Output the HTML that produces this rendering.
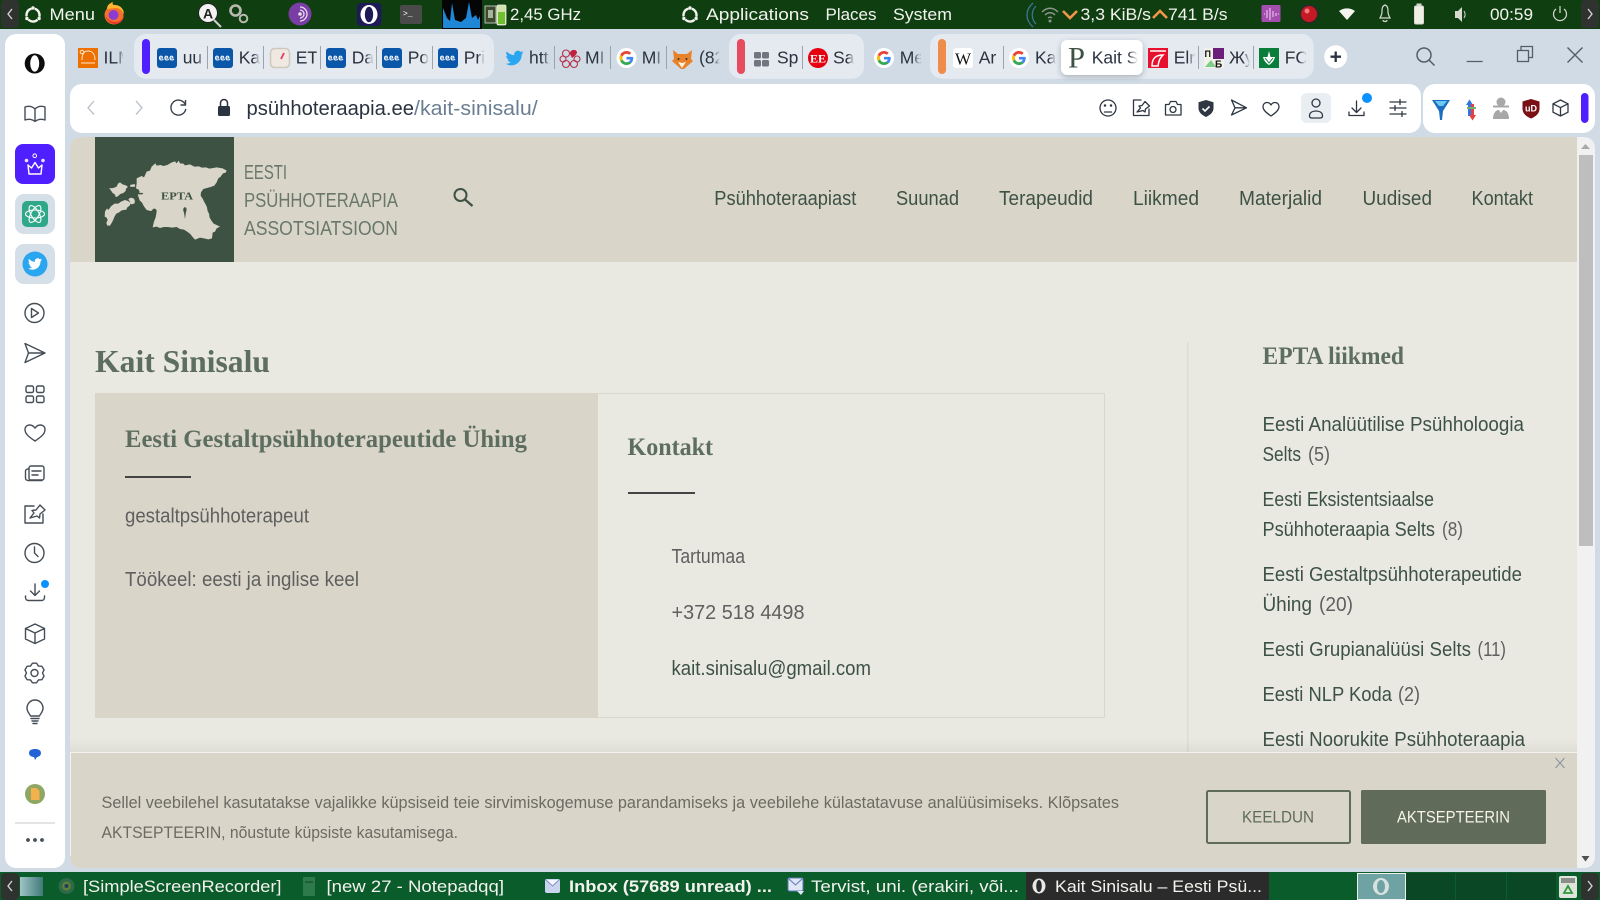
<!DOCTYPE html>
<html lang="et"><head><meta charset="utf-8"><title>Kait Sinisalu – Eesti Psühhoteraapia Assotsiatsioon</title>
<style>
html,body{margin:0;padding:0;width:1600px;height:900px;overflow:hidden;background:#d0dbe5}
svg{display:block}
text{font-family:"Liberation Sans",sans-serif;white-space:pre}
.sys{font-size:16.5px;fill:#f2f2ee}
.tab{font-size:17.5px;fill:#2b3340}
.j{font-size:20px;fill:#5f5f5f}
.l{font-size:20px;fill:#3d5245}
.nav{font-size:20px;fill:#3d5245}
.logo{font-size:20px;fill:#6a786c}
.h{font-family:"Liberation Serif",serif;font-weight:bold;fill:#5d6e60}
.c{font-size:17px;fill:#6b6b63}
.ic{fill:none;stroke:#454d57;stroke-width:1.4;stroke-linecap:round;stroke-linejoin:round}
.ic2{fill:none;stroke:#2f3742;stroke-width:1.3;stroke-linecap:round;stroke-linejoin:round}
</style></head><body>
<svg width="1600" height="900" viewBox="0 0 1600 900" xmlns="http://www.w3.org/2000/svg">
<defs>
<linearGradient id="fl"><stop offset="0" stop-color="#e4eaf0" stop-opacity="0"/><stop offset="1" stop-color="#e4eaf0"/></linearGradient>
<linearGradient id="fo"><stop offset="0" stop-color="#d0dbe5" stop-opacity="0"/><stop offset="1" stop-color="#d0dbe5"/></linearGradient>
<linearGradient id="fw"><stop offset="0" stop-color="#fff" stop-opacity="0"/><stop offset="1" stop-color="#fff"/></linearGradient>
<linearGradient id="sh" x1="0" y1="0" x2="0" y2="1"><stop offset="0" stop-color="#000" stop-opacity="0"/><stop offset="1" stop-color="#000" stop-opacity=".05"/></linearGradient>
<linearGradient id="desk" x1="0" y1="0" x2="1" y2="0"><stop offset="0" stop-color="#9fc4c4"/><stop offset="1" stop-color="#3f7a78"/></linearGradient>
<symbol id="err" viewBox="0 0 20 20"><rect width="20" height="20" rx="3" fill="#0a56a8"/><path d="M2.500 10h3c0-2.500-3-2.500-3 0 0 2.500 3 2.500 4 1M7.800 10h3c0-2.500-3-2.500-3 0 0 2.500 3 2.500 4 1M13 10h3c0-2.500-3-2.500-3 0 0 2.500 3 2.500 4 1" fill="none" stroke="#fff" stroke-width="1"/></symbol>
<symbol id="g" viewBox="0 0 20 20"><circle cx="10" cy="10" r="10" fill="#fff"/><g transform="translate(3 3) scale(.2917)"><path fill="#EA4335" d="M24 9.5c3.54 0 6.71 1.22 9.21 3.6l6.85-6.85C35.9 2.38 30.47 0 24 0 14.62 0 6.51 5.38 2.56 13.22l7.98 6.19C12.43 13.72 17.74 9.5 24 9.5z"/><path fill="#4285F4" d="M46.98 24.55c0-1.57-.15-3.09-.38-4.55H24v9.02h12.94c-.58 2.96-2.26 5.48-4.78 7.18l7.73 6c4.51-4.18 7.09-10.36 7.09-17.65z"/><path fill="#FBBC05" d="M10.53 28.59c-.48-1.45-.76-2.99-.76-4.59s.27-3.14.76-4.59l-7.98-6.19C.92 16.46 0 20.12 0 24c0 3.88.92 7.54 2.56 10.78l7.97-6.19z"/><path fill="#34A853" d="M24 48c6.48 0 11.93-2.13 15.89-5.81l-7.73-6c-2.15 1.45-4.92 2.3-8.16 2.3-6.26 0-11.57-4.22-13.47-9.91l-7.98 6.19C6.51 42.62 14.62 48 24 48z"/></g></symbol>
<symbol id="tw" viewBox="0 0 24 24"><path d="M23.953 4.57a10 10 0 01-2.825.775 4.958 4.958 0 002.163-2.723c-.951.555-2.005.959-3.127 1.184a4.92 4.92 0 00-8.384 4.482C7.69 8.095 4.067 6.13 1.64 3.162a4.822 4.822 0 00-.666 2.475c0 1.71.87 3.213 2.188 4.096a4.904 4.904 0 01-2.228-.616v.06a4.923 4.923 0 003.946 4.827 4.996 4.996 0 01-2.212.085 4.936 4.936 0 004.604 3.417 9.867 9.867 0 01-6.102 2.105c-.39 0-.779-.023-1.17-.067a13.995 13.995 0 007.557 2.209c9.053 0 13.998-7.496 13.998-13.985 0-.21 0-.42-.015-.63A9.935 9.935 0 0024 4.59z"/></symbol>
<symbol id="spin" viewBox="0 0 20 20"><circle cx="10" cy="10" r="6.500" fill="none" stroke="#f2f2ee" stroke-width="2.400" stroke-dasharray="10 3.600" transform="rotate(-74 10 10)"/><circle cx="10" cy="3" r="1.700" fill="#f2f2ee"/><circle cx="3.900" cy="13.500" r="1.700" fill="#f2f2ee"/><circle cx="16.100" cy="13.500" r="1.700" fill="#f2f2ee"/></symbol>
</defs>

<!-- browser background -->
<rect width="1600" height="900" fill="#d0dbe5"/>

<!-- top system bar -->
<rect width="1600" height="29" fill="#0f3f10"/>
<rect x="1" y="0" width="18" height="28" rx="4" fill="#2f332f"/>
<path d="M12 9l-4 5 4 5" fill="none" stroke="#d8d8d8" stroke-width="1.300"/>
<use href="#spin" x="23" y="5" width="20" height="20"/>
<text class="sys" x="49.500" y="20" textLength="45.500" lengthAdjust="spacingAndGlyphs">Menu</text>
<circle cx="114" cy="15" r="9.500" fill="#f5702c"/><path d="M107 9c0-4 3-6 6-7-1 2 0 3 2 3 5 0 9 4 9 9-2-4-5-6-8-6z" fill="#ffb52e"/><circle cx="113.500" cy="15" r="5" fill="#8a3bd1"/><path d="M105 15c1 5 5 9 10 9s8-3 9-8c-2 4-5 6-9 6s-8-3-10-7z" fill="#e8372e"/>
<circle cx="208" cy="13" r="9.500" fill="#f2f2f2" stroke="#222" stroke-width="1"/><text x="208" y="18.500" text-anchor="middle" style="font-size:14px;font-weight:bold;fill:#222">A</text><path d="M214 20l7 7" stroke="#cfcfcf" stroke-width="2"/>
<circle cx="235.500" cy="10.500" r="5" fill="none" stroke="#b9b9b0" stroke-width="2.600"/><circle cx="243.500" cy="18.500" r="3.800" fill="none" stroke="#b9b9b0" stroke-width="2"/>
<circle cx="300" cy="14" r="11.500" fill="#7a3da3"/><path d="M300 7a7 7 0 010 14M300 10a4 4 0 010 8" fill="none" stroke="#e8def0" stroke-width="1.300"/><circle cx="300" cy="14" r="1.800" fill="#e8def0"/>
<rect x="357" y="3" width="24.500" height="23" rx="4" fill="#1c1b58"/><ellipse cx="369" cy="14.500" rx="8.500" ry="9.500" fill="#fff"/><ellipse cx="369" cy="14.500" rx="4.200" ry="7.800" fill="#1c1b58"/>
<rect x="400" y="5" width="22" height="19" rx="2" fill="#4a4a4a"/><text x="403" y="16" style="font-size:8px;fill:#fff;font-family:'Liberation Mono',monospace">&gt;_</text>
<rect x="442" y="0" width="40" height="29" fill="#050505"/><path d="M443 28V8l4 10 3 3 2-18 3 17 6 2 5-4 3-16 3 16 4-3 2 5 2-4v12z" fill="#1f87d6"/>
<rect x="485" y="6" width="11" height="17" fill="#3a4a2a" stroke="#ddd" stroke-width=".8"/><rect x="488" y="10" width="5" height="8" fill="#a9b39b"/><rect x="497" y="5" width="9" height="20" rx="1.500" fill="#cfe3a8" stroke="#eee" stroke-width=".8"/><rect x="498" y="12" width="7" height="12" fill="#6fbf2f"/>
<text class="sys" x="510" y="20" textLength="71" lengthAdjust="spacingAndGlyphs">2,45 GHz</text>
<use href="#spin" x="680" y="5" width="20" height="20"/>
<text class="sys" x="706" y="20" textLength="103" lengthAdjust="spacingAndGlyphs">Applications</text>
<text class="sys" x="825.500" y="20" textLength="51" lengthAdjust="spacingAndGlyphs">Places</text>
<text class="sys" x="893" y="20" textLength="59" lengthAdjust="spacingAndGlyphs">System</text>
<path d="M1033 3c-8 7-8 17 0 24M1036 6c-5 5-5 13 0 18" fill="none" stroke="#3f78a0" stroke-width="1.200"/>
<path d="M1042 12c5-5 11-5 16 0M1045 15c3-3 7-3 10 0M1048 18c1-1 3-1 4 0" fill="none" stroke="#8f948f" stroke-width="1.400"/><circle cx="1050" cy="21" r="1.500" fill="#8f948f"/>
<path d="M1063 11l7 7 7-7" fill="none" stroke="#f0954a" stroke-width="2.600"/>
<text class="sys" x="1080.500" y="20" textLength="70.500" lengthAdjust="spacingAndGlyphs">3,3 KiB/s</text>
<path d="M1153 18l7-7 7 7" fill="none" stroke="#f0954a" stroke-width="2.600"/>
<text class="sys" x="1168" y="20" textLength="59.500" lengthAdjust="spacingAndGlyphs">741 B/s</text>
<rect x="1261.500" y="5" width="19" height="17" rx="1.500" fill="#a64db0"/><path d="M1264 14h1M1267 10v8M1270 8v12M1273 11v6M1276 13v3M1278 14h1" stroke="#f0d8f4" stroke-width="1"/>
<circle cx="1309" cy="14" r="9.500" fill="#2a2a2a"/><circle cx="1309" cy="14" r="8" fill="#c41a24"/><circle cx="1307" cy="11" r="2.500" fill="#f07a80"/>
<path d="M1339 11c5-3.500 11-3.500 16 0l-8 9z" fill="#f5f5f0"/>
<path d="M1385 5c-3 1-3 4-3 7s-1 4-2 6h10c-1-2-2-3-2-6s0-6-3-7zM1383 20c0 2 4 2 4 0" fill="none" stroke="#d8d8d0" stroke-width="1.200"/>
<rect x="1414.500" y="6" width="9" height="18" rx="1.500" fill="#eef0e6" stroke="#d8d8d0"/><rect x="1416.500" y="3.500" width="5" height="2.500" fill="#d8d8d0"/>
<path d="M1455 11h3l4-4v15l-4-4h-3z" fill="#d8d8d0"/><path d="M1464 11c1.500 2 1.500 5 0 7" fill="none" stroke="#d8d8d0" stroke-width="1"/>
<text class="sys" x="1490" y="20" textLength="43" lengthAdjust="spacingAndGlyphs">00:59</text>
<path d="M1556 9a6.500 6.500 0 108 0M1560 6v7" fill="none" stroke="#d8d8d0" stroke-width="1.200"/>
<rect x="1581" y="0" width="18" height="28" rx="4" fill="#2f332f"/>
<path d="M1588 9l4 5-4 5" fill="none" stroke="#d8d8d8" stroke-width="1.300"/>

<!-- sidebar -->
<rect x="5" y="34" width="60" height="834" rx="11" fill="#fff"/>
<ellipse cx="34.700" cy="63.500" rx="10" ry="10" fill="#0d0d0d"/><ellipse cx="34.700" cy="63.500" rx="4.500" ry="8.200" fill="#fff"/>
<path class="ic" d="M35 109c-3-3-7-3-10-2v13c3-1 7-1 10 1.500 3-2.500 7-2.500 10-1.500v-13c-3-1-7-1-10 2zM35 109v12"/>
<rect x="15" y="144" width="40" height="40" rx="8" fill="#4f1fff"/>
<path d="M28 165l3.500 3 3.500-5.500 3.500 5.500 3.500-3-1 9H29z" fill="none" stroke="#fff" stroke-width="1.400" stroke-linejoin="round"/><circle cx="26.500" cy="160.500" r="1.800" fill="#e8e0ff"/><circle cx="34.700" cy="155.700" r="1.800" fill="none" stroke="#fff"/><circle cx="43" cy="160.500" r="1.800" fill="#e8e0ff"/>
<rect x="15" y="194" width="40" height="40" rx="9" fill="#d5dfe8"/>
<rect x="22" y="201" width="26" height="26" rx="5" fill="#2fa88a"/>
<g fill="none" stroke="#fff" stroke-width="1.100"><ellipse cx="35" cy="214" rx="9.500" ry="4"/><ellipse cx="35" cy="214" rx="9.500" ry="4" transform="rotate(60 35 214)"/><ellipse cx="35" cy="214" rx="9.500" ry="4" transform="rotate(120 35 214)"/></g>
<rect x="15" y="244" width="40" height="40" rx="9" fill="#d5dfe8"/>
<circle cx="35" cy="264" r="12.500" fill="#2aa5f0"/>
<use href="#tw" x="28" y="257" width="14" height="14" fill="#fff"/>
<g class="ic">
<circle cx="34.500" cy="313" r="9.500"/><path d="M31.500 308.500l7 4.500-7 4.500z"/>
<path d="M25 343.500l20 9.500-20 9.500 3.500-9.500zM28.500 353h16.500"/>
<rect x="26" y="386" width="7.500" height="6.500" rx="1.500"/><rect x="36.500" y="386" width="7.500" height="6.500" rx="1.500"/><rect x="26" y="396" width="7.500" height="6.500" rx="1.500"/><rect x="36.500" y="396" width="7.500" height="6.500" rx="1.500"/>
<path d="M35 441c-6-4-10-7-10-11.500 0-3 2.300-4.500 4.500-4.500 2.200 0 4.300 1.200 5.500 3.200 1.200-2 3.300-3.200 5.500-3.200 2.200 0 4.500 1.500 4.500 4.500 0 4.500-4 7.500-10 11.500z"/>
<rect x="29" y="466" width="15" height="14" rx="2"/><path d="M29 469h-1c-1.500 0-2.500 1-2.500 2v7c0 1.500 1 2.500 2.500 2.500h14M32 471h9M32 475h6"/>
<path d="M34 506h-9v17h18v-9M30 518l4-5-2-2.500 4-.5 4-5 5 5-5 4-.5 4-2.500-2z"/>
<circle cx="34.500" cy="553" r="9.500"/><path d="M34.500 547v6l3.500 3.500"/>
<path d="M35 584v11M30.500 591l4.500 4.500 4.500-4.500M25.500 596v1.500c0 2 1.500 3 3 3h13c1.500 0 3-1 3-3V596"/>
<path d="M35 624l9.500 4.500v10.500l-9.500 4.500-9.500-4.500v-10.500zM25.500 628.500l9.500 4.500 9.500-4.500M35 633v10.500"/>
<circle cx="34.500" cy="673" r="3.500"/>
<polygon transform="translate(34.500 673)" points="-2.080,-9.780 2.080,-9.780 4,-6.930 7.430,-6.690 9.510,-3.090 8,0 9.510,3.090 7.430,6.690 4,6.930 2.080,9.780 -2.080,9.780 -4,6.930 -7.430,6.690 -9.510,3.090 -8,0 -9.510,-3.090 -7.430,-6.690 -4,-6.930"/>
<path d="M30.500 716c-1-2.500-3.500-4-3.500-8a8 8 0 0116 0c0 4-2.500 5.500-3.500 8zM31 718.500h8M32 721h6M33 723.500h4"/>
</g>
<circle cx="45" cy="584" r="4" fill="#0a90ff"/>
<path d="M29 753c0-3 3-4 6-4s6 1 6 4-3 4-4 4l-2 3-1-3c-2 0-5-1-5-4z" fill="#2463d6"/>
<circle cx="35" cy="794" r="10" fill="#8fa665"/><path d="M31 788h5.500l3 3v9h-8.500z" fill="#f2b14a"/>
<line x1="15" y1="823" x2="55" y2="823" stroke="#c5c9ce" stroke-width="1"/>
<circle cx="28" cy="840" r="1.900" fill="#454d57"/><circle cx="35" cy="840" r="1.900" fill="#454d57"/><circle cx="42" cy="840" r="1.900" fill="#454d57"/>

<!-- tab groups -->
<rect x="134" y="34" width="360" height="44.700" rx="12" fill="#e4eaf0"/>
<rect x="729" y="34" width="135" height="44.700" rx="12" fill="#e4eaf0"/>
<rect x="930" y="34" width="383.700" height="44.700" rx="12" fill="#e4eaf0"/>
<rect x="142" y="39" width="8" height="35" rx="4" fill="#4f1fff"/>
<rect x="737" y="39" width="8" height="35" rx="4" fill="#e84a60"/>
<rect x="938" y="39" width="8" height="35" rx="4" fill="#f08c4a"/>

<!-- dividers -->
<g stroke="#9aa4ae" stroke-width="1">
<path d="M207.500 46v23M263.500 46v23M320.500 46v23M376.500 46v23M432.500 46v23M554.500 46v23M610.500 46v23M666.500 46v23M802.500 46v23M1003.500 46v23M1198.500 46v23M1253.500 46v23"/>
</g>

<!-- tab icons -->
<rect x="78" y="48" width="20" height="20" fill="#ee7000"/><path d="M81 63h14M82 60c0-6 2-9 6-9 5 0 7 4 7 9" fill="none" stroke="#ffe8d0" stroke-width="1"/><circle cx="82" cy="52" r="1.800" fill="none" stroke="#ffe8d0"/>
<use href="#err" x="157" y="48" width="20" height="20"/>
<use href="#err" x="213" y="48" width="20" height="20"/>
<rect x="270.500" y="48.500" width="19" height="19" rx="4" fill="#efe9e2" stroke="#cfc6bc" stroke-width="1.500"/><path d="M281 59l3-6" stroke="#e8356a" stroke-width="1.800"/>
<use href="#err" x="326" y="48" width="20" height="20"/>
<use href="#err" x="382" y="48" width="20" height="20"/>
<use href="#err" x="438" y="48" width="20" height="20"/>
<use href="#tw" x="505.500" y="49" width="18" height="18" fill="#2aa5f0"/>
<g fill="none" stroke="#b2324a" stroke-width="1.100"><circle cx="566" cy="53.500" r="3.500"/><circle cx="574" cy="64" r="3.500"/><circle cx="566" cy="64" r="3.500"/><circle cx="563" cy="59" r="3"/><circle cx="577" cy="59" r="3"/></g><path d="M570 54c-1-4 6-6 7-2 0 3-4 5-5 6z" fill="#c0213c"/>
<use href="#g" x="616.500" y="48" width="20" height="20"/>
<path d="M673 50l5 4h9l5-4-1 9 2 2-9 8h-3l-9-8 2-2z" fill="#e8822a"/><path d="M678 62l4 6 4-6-4 1z" fill="#fff2df"/><circle cx="678.500" cy="59" r="1" fill="#333"/><circle cx="686.500" cy="59" r="1" fill="#333"/>
<rect x="754" y="52" width="7" height="6.500" rx="1.500" fill="#6f7680"/><rect x="762" y="52" width="7" height="6.500" rx="1.500" fill="#6f7680"/><rect x="754" y="60" width="7" height="6.500" rx="1.500" fill="#6f7680"/><rect x="762" y="60" width="7" height="6.500" rx="1.500" fill="#6f7680"/>
<circle cx="818" cy="58" r="10" fill="#e4000f"/><text x="818" y="62.500" text-anchor="middle" style="font-size:12px;font-family:'Liberation Serif',serif;font-weight:bold;fill:#fff">EE</text>
<use href="#g" x="874" y="48" width="20" height="20"/>
<rect x="953" y="48" width="20" height="20" rx="3" fill="#fff"/><text x="963" y="64.500" text-anchor="middle" style="font-size:17px;font-family:'Liberation Serif',serif;fill:#111">W</text>
<use href="#g" x="1009" y="48" width="20" height="20"/>
<rect x="1061" y="40" width="81.700" height="35" rx="6" fill="#fff" style="filter:drop-shadow(0 2px 3px rgba(60,70,80,.35))"/>
<text x="1068" y="67.500" textLength="17" lengthAdjust="spacingAndGlyphs" style="font-size:30px;font-family:'Liberation Serif',serif;fill:#3e5244">P</text>
<rect x="1148" y="48" width="20" height="20" fill="#e8112d"/><path d="M1150 51h16M1152 66c0-8 4-11 11-11-3 3-4 5-5 11z" fill="none" stroke="#fff" stroke-width="1.500"/>
<rect x="1204" y="48" width="20" height="20" fill="#f2f2e8"/><rect x="1213" y="48" width="11" height="11" fill="#6c1f7a"/><path d="M1205 67l6-7 5 7z" fill="#7ecb8a"/><text x="1204.500" y="57" style="font-size:9px;font-weight:bold;fill:#111">П</text><text x="1215" y="67.500" style="font-size:10px;font-weight:bold;fill:#111">Б</text>
<rect x="1259" y="48" width="20" height="20" fill="#0a7d3b"/><path d="M1269 51l-2 8 2 2 2-2zM1263 57c1 4 3 6 6 8 3-2 5-4 6-8" fill="#fff" stroke="none"/><path d="M1265 58l4 5 4-5" fill="none" stroke="#0a7d3b" stroke-width="1"/>

<!-- tab text -->
<svg x="103.500" y="44" width="20" height="26"><text class="tab" y="19.600">ILM</text><rect x="14" width="6" height="26" fill="url(#fo)"/></svg>
<svg x="182.700" y="44" width="21" height="26"><text class="tab" y="19.600">uu</text><rect x="15" width="6" height="26" fill="url(#fl)"/></svg>
<svg x="238.700" y="44" width="21" height="26"><text class="tab" y="19.600">Ka</text><rect x="15" width="6" height="26" fill="url(#fl)"/></svg>
<svg x="295.700" y="44" width="21" height="26"><text class="tab" y="19.600">ET</text></svg>
<svg x="351.700" y="44" width="21" height="26"><text class="tab" y="19.600">Da</text><rect x="14" width="7" height="26" fill="url(#fl)"/></svg>
<svg x="407.700" y="44" width="21" height="26"><text class="tab" y="19.600">Po</text><rect x="14" width="7" height="26" fill="url(#fl)"/></svg>
<svg x="463.700" y="44" width="21" height="26"><text class="tab" y="19.600">Pri</text><rect x="14" width="7" height="26" fill="url(#fl)"/></svg>
<svg x="529" y="44" width="21" height="26"><text class="tab" y="19.600">https</text><rect x="14" width="7" height="26" fill="url(#fo)"/></svg>
<svg x="585" y="44" width="21" height="26"><text class="tab" y="19.600">MI</text><rect x="14" width="7" height="26" fill="url(#fo)"/></svg>
<svg x="641.700" y="44" width="21" height="26"><text class="tab" y="19.600">MI</text><rect x="14" width="7" height="26" fill="url(#fo)"/></svg>
<svg x="699" y="44" width="21" height="26"><text class="tab" y="19.600">(82</text><rect x="13" width="8" height="26" fill="url(#fo)"/></svg>
<svg x="777" y="44" width="21" height="26"><text class="tab" y="19.600">Sp</text></svg>
<svg x="833" y="44" width="21" height="26"><text class="tab" y="19.600">Sa</text><rect x="15" width="6" height="26" fill="url(#fl)"/></svg>
<svg x="899.700" y="44" width="21" height="26"><text class="tab" y="19.600">Me</text><rect x="13" width="8" height="26" fill="url(#fo)"/></svg>
<svg x="978.700" y="44" width="21" height="26"><text class="tab" y="19.600">Ar</text></svg>
<svg x="1035" y="44" width="21" height="26"><text class="tab" y="19.600">Ka</text><rect x="14" width="7" height="26" fill="url(#fl)"/></svg>
<svg x="1091.700" y="44" width="46" height="26"><text class="tab" y="19.600">Kait S</text><rect x="36" width="10" height="26" fill="url(#fw)"/></svg>
<svg x="1173.700" y="44" width="21" height="26"><text class="tab" y="19.600">Elm</text><rect x="14" width="7" height="26" fill="url(#fl)"/></svg>
<svg x="1229" y="44" width="21" height="26"><text class="tab" y="19.600">Жу</text><rect x="14" width="7" height="26" fill="url(#fl)"/></svg>
<svg x="1284.700" y="44" width="21" height="26"><text class="tab" y="19.600">FC</text><rect x="14" width="7" height="26" fill="url(#fl)"/></svg>

<!-- new tab + window controls -->
<circle cx="1335.700" cy="56.700" r="11.500" fill="#fff"/><path d="M1330.500 56.700h10.500M1335.700 51.500v10.500" stroke="#2b3340" stroke-width="2.300"/>
<circle cx="1424" cy="55" r="7" fill="none" stroke="#555e68" stroke-width="1.500"/><path d="M1429 60l5.500 5.500" stroke="#555e68" stroke-width="1.500"/>
<path d="M1466.700 61.500h16" stroke="#555e68" stroke-width="1.300"/>
<rect x="1517.500" y="50.500" width="11" height="11" fill="none" stroke="#555e68" stroke-width="1.300"/><path d="M1521 50.500v-4h11.500v11h-4" fill="none" stroke="#555e68" stroke-width="1.300"/>
<path d="M1567.500 47.500l15 15M1582.500 47.500l-15 15" stroke="#555e68" stroke-width="1.400"/>

<!-- address bar -->
<rect x="70" y="84" width="1351" height="49" rx="12" fill="#fff"/>
<rect x="1423" y="84" width="172" height="49" rx="12" fill="#fff"/>
<path d="M94 101l-6 6.800 6 6.800M136 101l6 6.800-6 6.800" fill="none" stroke="#b8bec5" stroke-width="1.300"/>
<path d="M185 104a7.500 7.500 0 10.800 5M185.500 100v5h-5" fill="none" stroke="#3a424c" stroke-width="1.400"/>
<rect x="218" y="106" width="12" height="10" rx="1.500" fill="#2b3340"/><path d="M220.500 106v-3a3.500 3.500 0 017 0v3" fill="none" stroke="#2b3340" stroke-width="1.500"/>
<text x="246.500" y="115" textLength="167.500" lengthAdjust="spacingAndGlyphs" style="font-size:20.500px;fill:#2b3340">psühhoteraapia.ee</text>
<text x="414" y="115" textLength="123.700" lengthAdjust="spacingAndGlyphs" style="font-size:20.500px;fill:#6b7f93">/kait-sinisalu/</text>
<g class="ic2">
<circle cx="1108" cy="108" r="8"/><path d="M1104.500 112h7"/><circle cx="1105" cy="105.500" r=".6"/><circle cx="1111" cy="105.500" r=".6"/>
<path d="M1141 100h-7.500v15.500h15.500v-6.500M1137 112l3.500-4-1.500-2 3-.5 3-4 4.500 4.500-4 3-.5 3-2-1.500z"/>
<path d="M1165.500 104.500h3.500l1.500-3h5.500l1.500 3h3.500v10.500h-15.500z"/><circle cx="1173" cy="109.500" r="3"/>
<path d="M1231.500 100l15 7.800-15 7.200 3.500-7.200zM1235 107.800h11.500"/>
<path d="M1271 116c-5-3.500-8-6-8-9.500 0-2.500 2-4 4-4 1.700 0 3.200 1 4 2.500.8-1.500 2.300-2.500 4-2.500 2 0 4 1.500 4 4 0 3.500-3 6-8 9.500z"/>
</g>
<path d="M1206 100l7.500 2.300v6c0 4-3.500 7-7.500 8.700-4-1.700-7.500-4.700-7.500-8.700v-6z" fill="#2f3742"/><path d="M1202.500 108.500l2.500 2.500 4.500-4.500" fill="none" stroke="#fff" stroke-width="1.600"/>
<rect x="1301" y="93" width="30" height="30" rx="6" fill="#e9eef3"/>
<g class="ic2"><circle cx="1316" cy="103" r="4"/><path d="M1309.500 116c0-3.500 3-5 6.500-5s6.500 1.500 6.500 5c0 1.500-1 2-2.500 2h-8c-1.500 0-2.500-.5-2.500-2z"/>
<path d="M1356.500 101v11M1352 108l4.500 4.500 4.500-4.500M1349 112v3.500h15v-3.500"/>
<path d="M1390 102h16M1390 108h16M1390 114h16M1400 99.500v5M1395 105.500v5M1402 111.500v5"/></g>
<circle cx="1367" cy="98" r="5" fill="#0a90ff"/>
<path d="M1432 100h18l-7 11-1 9h-2l-1-9z" fill="#1a6fc0"/><path d="M1435 101h12l-4 5h-4z" fill="#6fc8f2"/>
<path d="M1466 105l3.500-5.500 3.500 5.500h-2v11h-3v-11z" fill="#2b78e4"/><path d="M1471 104h3v11h2l-3.500 5.500-3.500-5.500h2z" fill="#e84040"/><rect x="1467" y="107" width="9" height="2" fill="#6fb36f"/>
<circle cx="1501" cy="102" r="4.500" fill="#a8a8a8"/><path d="M1493 105.500h16v2h-16zM1493 119c0-5 2-9 6-9l2 3 2-3c4 0 6 4 6 9z" fill="#a8a8a8"/>
<path d="M1531 99l8.500 2.500v7c0 5-3.500 8-8.500 10-5-2-8.500-5-8.500-10v-7z" fill="#7a0f14"/><text x="1531" y="111.500" text-anchor="middle" style="font-size:9px;font-weight:bold;fill:#fff">uD</text>
<path class="ic2" d="M1560.500 100l7.500 3.800v8.400l-7.500 3.800-7.500-3.800v-8.400zM1553 103.800l7.500 3.800 7.500-3.800M1560.500 107.600v8.400"/>
<rect x="1581" y="93" width="7.500" height="30" rx="3.700" fill="#4f1fff"/>

<!-- page -->
<path d="M82 137H1577V868H82q-12 0-12-12V149q0-12 12-12z" fill="#eae9e1"/>
<path d="M82 137H1577V262H70V149q0-12 12-12z" fill="#d9d5c9"/>
<rect x="95" y="137" width="139" height="125" fill="#3e5244"/>
<g transform="translate(0 130) scale(.3333)" fill="#d9d5c9">
<polygon points="410,145 425,138 432,142 440,125 450,122 455,110 466,100 470,107 482,105 490,108 502,105 514,98 525,94 530,100 536,92 540,100 550,101 555,106 570,103 583,110 597,109 605,113 618,112 628,116 640,114 650,112 668,115 680,122 677,128 669,130 662,140 655,145 650,157 643,167 632,171 621,174 610,177 603,187 602,197 608,206 613,216 617,223 621,232 623,243 627,251 629,263 635,273 641,281 660,290 650,295 645,305 638,308 636,325 625,328 612,325 600,323 585,329 577,320 571,312 563,306 552,299 540,297 530,291 516,293 504,291 492,291 480,294 470,290 458,292 462,275 467,262 470,245 462,240 452,243 440,240 432,229 426,218 419,211 415,199 413,192 419,186 416,179 408,175 410,160"/>
<polygon points="315,245 321,235 325,240 334,228 344,221 355,221 363,215 375,210 384,213 392,219 389,227 382,232 379,239 365,241 356,248 349,251 344,259 340,269 336,277 330,287 322,287 319,279 323,270 320,263 314,260"/>
<polygon points="327,175 340,174 350,170 354,161 360,157 368,163 378,166 384,171 378,176 377,183 370,189 361,192 352,200 347,201 345,194 337,188 332,180"/>
<polygon points="385,207 393,203 402,206 405,214 403,221 393,223 390,216"/>
<polygon points="390,165 404,162 406,170 392,171"/>
<path d="M408 188l22 1-3 4-18 0z" fill="#3e5244"/>
<path d="M553 232c6-2 9 6 5 14l-3 21-3-20c-3-5-3-13 1-15z" fill="#3e5244"/>
<circle cx="463" cy="243" r="7" fill="#3e5244"/>
</g>
<text x="177" y="199.500" text-anchor="middle" textLength="32" lengthAdjust="spacingAndGlyphs" style="font-size:10px;font-family:'Liberation Serif',serif;font-weight:bold;fill:#3e5244">EPTA</text>
<text class="logo" x="244" y="179" textLength="43" lengthAdjust="spacingAndGlyphs">EESTI</text>
<text class="logo" x="244" y="207" textLength="154" lengthAdjust="spacingAndGlyphs">PSÜHHOTERAAPIA</text>
<text class="logo" x="244" y="235" textLength="154" lengthAdjust="spacingAndGlyphs">ASSOTSIATSIOON</text>
<circle cx="460.500" cy="195" r="6" fill="none" stroke="#3d5245" stroke-width="2"/><path d="M465 199.500l7.500 6.500" stroke="#3d5245" stroke-width="2.300"/>
<text class="nav" x="714.300" y="205" textLength="142" lengthAdjust="spacingAndGlyphs">Psühhoteraapiast</text>
<text class="nav" x="896" y="205" textLength="63" lengthAdjust="spacingAndGlyphs">Suunad</text>
<text class="nav" x="999" y="205" textLength="94" lengthAdjust="spacingAndGlyphs">Terapeudid</text>
<text class="nav" x="1133" y="205" textLength="66" lengthAdjust="spacingAndGlyphs">Liikmed</text>
<text class="nav" x="1239" y="205" textLength="83" lengthAdjust="spacingAndGlyphs">Materjalid</text>
<text class="nav" x="1362.500" y="205" textLength="69.500" lengthAdjust="spacingAndGlyphs">Uudised</text>
<text class="nav" x="1471.500" y="205" textLength="61.500" lengthAdjust="spacingAndGlyphs">Kontakt</text>

<text class="h" x="95" y="372" textLength="175" lengthAdjust="spacingAndGlyphs" style="font-size:32px">Kait Sinisalu</text>

<!-- card -->
<rect x="95" y="393" width="503" height="325" fill="#d9d5c9"/>
<path d="M598 393.500H1104.500V717.500H598" fill="none" stroke="#d8d8d0" stroke-width="1"/>
<text class="h" x="125" y="447" textLength="402" lengthAdjust="spacingAndGlyphs" style="font-size:25px">Eesti Gestaltpsühhoterapeutide Ühing</text>
<rect x="125" y="476" width="66" height="2" fill="#444"/>
<text class="j" x="125" y="522.500" textLength="184" lengthAdjust="spacingAndGlyphs">gestaltpsühhoterapeut</text>
<text class="j" x="125" y="586" textLength="234" lengthAdjust="spacingAndGlyphs">Töökeel: eesti ja inglise keel</text>
<text class="h" x="627.500" y="455" textLength="85.500" lengthAdjust="spacingAndGlyphs" style="font-size:25px">Kontakt</text>
<rect x="628" y="492" width="67" height="2" fill="#444"/>
<text class="j" x="671.500" y="563" textLength="73.500" lengthAdjust="spacingAndGlyphs">Tartumaa</text>
<text class="j" x="671.500" y="619" textLength="133" lengthAdjust="spacingAndGlyphs">+372 518 4498</text>
<text class="l" x="671.500" y="675" textLength="199.500" lengthAdjust="spacingAndGlyphs">kait.sinisalu@gmail.com</text>

<!-- sidebar list -->
<rect x="1187.300" y="342" width="1" height="410" fill="#d8d8d0"/>
<text class="h" x="1262.500" y="364" textLength="141.500" lengthAdjust="spacingAndGlyphs" style="font-size:25px">EPTA liikmed</text>
<text class="l" x="1262.500" y="431" textLength="261.500" lengthAdjust="spacingAndGlyphs">Eesti Analüütilise Psühholoogia</text>
<text class="l" x="1262.500" y="461" textLength="38.500" lengthAdjust="spacingAndGlyphs">Selts</text><text class="j" x="1308" y="461" textLength="22" lengthAdjust="spacingAndGlyphs">(5)</text>
<text class="l" x="1262.500" y="506" textLength="171.500" lengthAdjust="spacingAndGlyphs">Eesti Eksistentsiaalse</text>
<text class="l" x="1262.500" y="536" textLength="172.500" lengthAdjust="spacingAndGlyphs">Psühhoteraapia Selts</text><text class="j" x="1442" y="536" textLength="21" lengthAdjust="spacingAndGlyphs">(8)</text>
<text class="l" x="1262.500" y="581" textLength="259.500" lengthAdjust="spacingAndGlyphs">Eesti Gestaltpsühhoterapeutide</text>
<text class="l" x="1262.500" y="611" textLength="49.500" lengthAdjust="spacingAndGlyphs">Ühing</text><text class="j" x="1319" y="611" textLength="34" lengthAdjust="spacingAndGlyphs">(20)</text>
<text class="l" x="1262.500" y="656" textLength="208.500" lengthAdjust="spacingAndGlyphs">Eesti Grupianalüüsi Selts</text><text class="j" x="1477.500" y="656" textLength="28.500" lengthAdjust="spacingAndGlyphs">(11)</text>
<text class="l" x="1262.500" y="701" textLength="129.500" lengthAdjust="spacingAndGlyphs">Eesti NLP Koda</text><text class="j" x="1398" y="701" textLength="22" lengthAdjust="spacingAndGlyphs">(2)</text>
<text class="l" x="1262.500" y="746" textLength="262.500" lengthAdjust="spacingAndGlyphs">Eesti Noorukite Psühhoteraapia</text>

<!-- scrollbar -->
<path d="M1577 137h6q12 0 12 12V856q0 12-12 12h-6z" fill="#f1f1f1"/>
<rect x="1579" y="155" width="14" height="391" fill="#bebebe"/>
<path d="M1581 149l4.500-5 4.500 5z" fill="#a8a8a8"/>
<path d="M1581.500 856l4 5.500 4-5.500z" fill="#505050"/>

<!-- cookie banner -->
<rect x="70" y="738" width="1507" height="14" fill="url(#sh)"/>
<path d="M70 752H1577V868H82q-12 0-12-12z" fill="#d9d5c9"/>
<path d="M70.500 856V752.500H1577" fill="none" stroke="#f3f2ec" stroke-width="1"/>
<path d="M1555.500 758l9 10M1564.500 758l-9 10" stroke="#8a93a0" stroke-width="1.100"/>
<text class="c" x="101.500" y="808" textLength="1017.500" lengthAdjust="spacingAndGlyphs">Sellel veebilehel kasutatakse vajalikke küpsiseid teie sirvimiskogemuse parandamiseks ja veebilehe külastatavuse analüüsimiseks. Klõpsates</text>
<text class="c" x="101.500" y="838" textLength="356.500" lengthAdjust="spacingAndGlyphs">AKTSEPTEERIN, nõustute küpsiste kasutamisega.</text>
<rect x="1207" y="791" width="143" height="52" rx="1.500" fill="none" stroke="#5f6b5b" stroke-width="2"/>
<text x="1242" y="822.500" textLength="72" lengthAdjust="spacingAndGlyphs" style="font-size:17px;fill:#5f6b5b">KEELDUN</text>
<rect x="1361" y="790" width="185" height="54" rx="1.500" fill="#616b59"/>
<text x="1397" y="822.500" textLength="113" lengthAdjust="spacingAndGlyphs" style="font-size:17px;fill:#f5f3ea">AKTSEPTEERIN</text>

<!-- bottom taskbar -->
<rect y="872" width="1600" height="28" fill="#0b5c2b"/>
<rect x="1" y="873" width="18" height="27" rx="4" fill="#2f332f"/>
<path d="M12 881l-4 5 4 5" fill="none" stroke="#d8d8d8" stroke-width="1.300"/>
<rect x="20" y="877" width="23" height="19" fill="url(#desk)"/>
<circle cx="66.500" cy="886" r="8" fill="#2e6a4a"/><circle cx="66.500" cy="886" r="4.500" fill="#5f7f3a"/><circle cx="66.500" cy="886" r="2" fill="#1d3f5c"/>
<text class="sys" x="83" y="892" textLength="198.500" lengthAdjust="spacingAndGlyphs">[SimpleScreenRecorder]</text>
<rect x="303" y="877" width="12" height="19" rx="1" fill="#2f7a4a"/><rect x="305" y="881" width="8" height="2" fill="#1f5f38"/>
<text class="sys" x="326.500" y="892" textLength="177.500" lengthAdjust="spacingAndGlyphs">[new 27 - Notepadqq]</text>
<rect x="545" y="879" width="15" height="14" rx="2" fill="#c9d4ef"/><path d="M546 880l6.500 6 6.500-6" fill="#f5f5ff" stroke="#7f90c9"/>
<text class="sys" x="569" y="892" textLength="203" lengthAdjust="spacingAndGlyphs" style="font-weight:bold">Inbox (57689 unread) ...</text>
<rect x="788" y="878" width="15" height="13" rx="1.500" fill="#dfe6f5" stroke="#5d77b5"/><path d="M789 879l6.500 6 6.500-6" fill="none" stroke="#5d77b5"/><path d="M797 891l4 4 3-4z" fill="#dfe6f5"/>
<text class="sys" x="811" y="892" textLength="208" lengthAdjust="spacingAndGlyphs">Tervist, uni. (erakiri, või...</text>
<rect x="1026" y="872" width="243" height="28" fill="#2b2b2b"/>
<ellipse cx="1039" cy="886" rx="6.500" ry="7.500" fill="#e8e8e8"/><ellipse cx="1039" cy="886" rx="2.800" ry="6" fill="#2b2b2b"/>
<text class="sys" x="1055" y="892" textLength="207" lengthAdjust="spacingAndGlyphs">Kait Sinisalu – Eesti Psü...</text>
<rect x="1406" y="873" width="150" height="27" fill="#0a4724"/>
<path d="M1455.500 873v27M1506.500 873v27" stroke="#0b5c2b"/>
<rect x="1357.500" y="873.500" width="48" height="26" fill="#6fa3a3" stroke="#f0f0f0"/>
<ellipse cx="1381" cy="886.500" rx="8" ry="8.500" fill="#d8e0e0"/><ellipse cx="1381" cy="886.500" rx="4" ry="6.500" fill="#6fa3a3"/>
<rect x="1559" y="876" width="18" height="22" rx="2" fill="#dfe5dd"/><rect x="1561" y="878" width="14" height="5" fill="#8a8f8a"/><path d="M1564 893l4-7 4 7z" fill="none" stroke="#2f9a3a" stroke-width="1.800"/>
<rect x="1581" y="873" width="18" height="27" rx="4" fill="#2f332f"/>
<path d="M1588 881l4 5-4 5" fill="none" stroke="#d8d8d8" stroke-width="1.300"/>
</svg>
</body></html>
